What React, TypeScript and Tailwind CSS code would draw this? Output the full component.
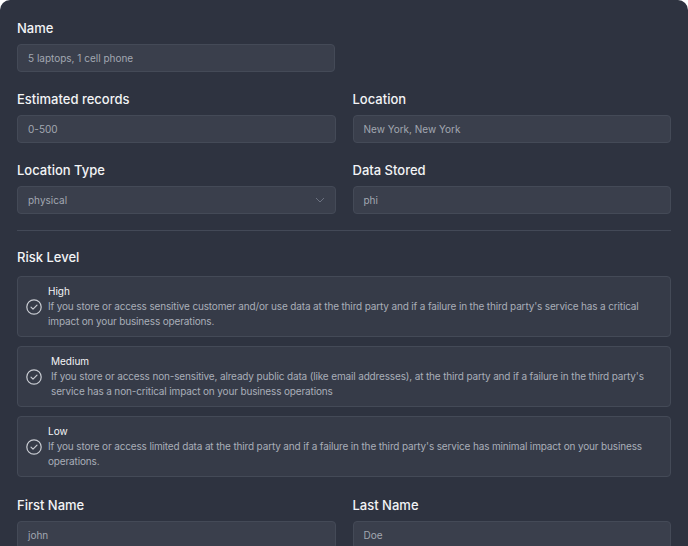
import React from "react";

const Check = () => (
  <svg width="16" height="16" viewBox="0 0 16 16" fill="none" stroke="#c9ccd3" strokeWidth="1.2" className="shrink-0">
    <circle cx="8" cy="8" r="7.2" />
    <path d="M5 8.2l2 2 4-4" strokeLinecap="round" strokeLinejoin="round" />
  </svg>
);

const Field = ({ label, value, select }: { label: string; value: string; select?: boolean }) => (
  <div className="flex-1">
    <div className="text-[13px] font-medium text-[#f3f4f6] leading-4 mb-[8px]">{label}</div>
    <div className="h-[28px] rounded-[4px] border border-[#444a57] bg-[#3a3f4c] px-[10px] flex items-center justify-between text-[10px] text-[#a2a7b1]">
      <span>{value}</span>
      {select && (
        <svg width="10" height="6" viewBox="0 0 10 6" fill="none" stroke="#6b7180" strokeWidth="1"><path d="M1 1l4 4 4-4" /></svg>
      )}
    </div>
  </div>
);

const Risk = ({ title, text, indent }: { title: string; text: string; indent: string }) => (
  <div className="rounded-[4px] border border-[#444a57] bg-[#363b48] pl-[8px] pr-[6px] py-[7px] flex items-center gap-[6px]">
    <Check />
    <div className={indent}>
      <div className="text-[10px] text-[#f3f4f6] leading-[14px] mb-[1px]">{title}</div>
      <div className="text-[10px] text-[#a9aeb8] leading-[15px] tracking-[-0.15px]">{text}</div>
    </div>
  </div>
);

export default function App() {
  return (
    <div className="w-[688px] h-[546px] bg-white overflow-hidden" style={{ fontFamily: "Inter, sans-serif" }}>
      <div className="h-full rounded-t-[10px] bg-[#2e3340] px-[17px] pt-[20px]">
        <div className="w-[318px]">
          <Field label="Name" value="5 laptops, 1 cell phone" />
        </div>
        <div className="flex gap-[17px] mt-[19px]">
          <Field label="Estimated records" value="0-500" />
          <Field label="Location" value="New York, New York" />
        </div>
        <div className="flex gap-[17px] mt-[19px]">
          <Field label="Location Type" value="physical" select />
          <Field label="Data Stored" value="phi" />
        </div>
        <div className="h-px bg-[#434957] mt-[16px]" />
        <div className="text-[13px] font-medium text-[#f3f4f6] leading-4 mt-[18px] mb-[11px]">Risk Level</div>
        <div className="flex flex-col gap-[9px]">
          <Risk indent="" title="High" text="If you store or access sensitive customer and/or use data at the third party and if a failure in the third party's service has a critical impact on your business operations." />
          <Risk indent="pl-[3px]" title="Medium" text="If you store or access non-sensitive, already public data (like email addresses), at the third party and if a failure in the third party's service has a non-critical impact on your business operations" />
          <Risk indent="" title="Low" text="If you store or access limited data at the third party and if a failure in the third party's service has minimal impact on your business operations." />
        </div>
        <div className="flex gap-[17px] mt-[20px]">
          <Field label="First Name" value="john" />
          <Field label="Last Name" value="Doe" />
        </div>
      </div>
    </div>
  );
}
